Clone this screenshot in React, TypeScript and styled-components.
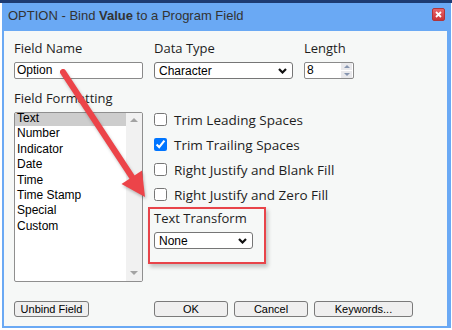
import styled, { createGlobalStyle } from "styled-components";

const GlobalStyle = createGlobalStyle`
  html, body {
    margin: 0;
    padding: 0;
  }
  body {
    width: 452px;
    height: 330px;
    overflow: hidden;
    background: #ffffff;
    font-family: "Liberation Sans", Arial, sans-serif;
  }
`;

const Screen = styled.div`
  position: relative;
  width: 452px;
  height: 330px;
  box-sizing: border-box;
  padding: 3px 0 0 2px;
  background: linear-gradient(#1d3b72 0 3px, #ffffff 3px);
`;

const Window = styled.div`
  width: 449px;
  height: 325px;
  box-sizing: border-box;
  padding: 0 4px 2px 2px;
  background: #6aa9f4;
  display: flex;
  flex-direction: column;
`;

const TitleBar = styled.div`
  height: 28px;
  flex: none;
  display: flex;
  align-items: center;
  justify-content: space-between;
  padding: 0 2px 3px 4px;
  box-sizing: border-box;
  font-size: 13px;
  color: #333333;
`;

const CloseButton = styled.div`
  width: 13px;
  height: 13px;
  box-sizing: border-box;
  align-self: flex-start;
  margin-top: 5px;
  border: 1px solid #b0353a;
  border-radius: 2px;
  background: linear-gradient(#e8646a, #c93338);
  display: grid;
  place-items: center;
`;

const Body = styled.div`
  flex: 1;
  background: #f6f8f7;
  padding: 9px 10px 0 10px;
  display: flex;
  flex-direction: column;
`;

const TopRow = styled.div`
  display: flex;
  gap: 11px;
`;

const Group = styled.div<{ $w: number }>`
  width: ${(p) => p.$w}px;
  display: flex;
  flex-direction: column;
`;

const Label = styled.div<{ $gap?: number }>`
  font-family: "Open Sans", sans-serif;
  font-size: 13px;
  line-height: 16px;
  color: #1e1e1e;
  margin-bottom: ${(p) => p.$gap ?? 6}px;
  white-space: nowrap;
`;

const TextBox = styled.div`
  height: 17px;
  box-sizing: border-box;
  border: 1px solid #8a8a8a;
  border-radius: 2px;
  background: #ffffff;
  font-size: 12px;
  line-height: 15px;
  padding: 0 2px;
  color: #000;
  display: flex;
  align-items: center;
  justify-content: space-between;
`;

const Spinner = styled.div`
  width: 11px;
  align-self: stretch;
  display: flex;
  flex-direction: column;
  gap: 1px;
  margin-right: -1px;
`;

const SpinHalf = styled.div<{ $down?: boolean }>`
  flex: 1;
  background: #e9e9ec;
  display: grid;
  place-items: center;
  &::after {
    content: "";
    border-left: 3px solid transparent;
    border-right: 3px solid transparent;
    ${(p) =>
      p.$down ? "border-top: 3px solid #8796b0;" : "border-bottom: 3px solid #8796b0;"}
  }
`;

const Select = styled.div<{ $w?: number }>`
  ${(p) => (p.$w ? `width: ${p.$w}px;` : "")}
  height: 17px;
  box-sizing: border-box;
  border: 1px solid #767676;
  border-radius: 3px;
  background: #ffffff;
  font-size: 12px;
  color: #000;
  padding: 0 5px 0 4px;
  display: flex;
  align-items: center;
  justify-content: space-between;
`;

const FormatRow = styled.div`
  margin-top: 11px;
  display: grid;
  grid-template-columns: 129px 1fr;
  column-gap: 11px;
`;

const ListBox = styled.div`
  height: 170px;
  box-sizing: border-box;
  border: 1px solid #8f8f8f;
  border-radius: 2px;
  background: #ffffff;
  display: flex;
  overflow: hidden;
`;

const Items = styled.div`
  flex: 1;
  margin-top: -2px;
`;

const Item = styled.div<{ $selected?: boolean }>`
  font-size: 12px;
  line-height: 15.4px;
  padding-left: 2px;
  color: #000;
  background: ${(p) => (p.$selected ? "#cdcdcd" : "transparent")};
`;

const ScrollTrack = styled.div`
  width: 16px;
  background: #f1f1f1;
  display: flex;
  flex-direction: column;
  justify-content: space-between;
  align-items: center;
  padding: 5px 0 6px;
`;

const Triangle = styled.div<{ $down?: boolean }>`
  border-left: 4px solid transparent;
  border-right: 4px solid transparent;
  ${(p) =>
    p.$down ? "border-top: 4px solid #a3a3a3;" : "border-bottom: 4px solid #a3a3a3;"}
`;

const Options = styled.div`
  padding-top: 17px;
  display: flex;
  flex-direction: column;
  align-items: flex-start;
`;

const CheckRow = styled.label`
  height: 25px;
  display: flex;
  align-items: center;
  font-family: "Open Sans", sans-serif;
  font-size: 13.5px;
  line-height: 16px;
  color: #1e1e1e;
  white-space: nowrap;
  input {
    width: 13px;
    height: 13px;
    margin: 0 7px 0 0;
  }
`;

const Highlight = styled.div`
  margin-left: -6px;
  width: 118px;
  box-sizing: border-box;
  border: 2px solid #e8444a;
  padding: 1px 0 13px 4px;
  box-shadow: 2px 3px 4px rgba(0, 0, 0, 0.22);
`;

const ButtonRow = styled.div`
  margin-top: 19px;
  display: grid;
  grid-template-columns: 129px 1fr;
  column-gap: 11px;
`;

const ButtonGroup = styled.div`
  display: flex;
  gap: 6px;
`;

const Button = styled.div<{ $w: number }>`
  width: ${(p) => p.$w}px;
  height: 16px;
  box-sizing: border-box;
  border: 1px solid #7a7a7a;
  border-radius: 3px;
  background: #efefef;
  font-size: 11px;
  line-height: 14px;
  color: #000;
  text-align: center;
`;

const Annotation = styled.svg`
  position: absolute;
  left: 0;
  top: 0;
  pointer-events: none;
  filter: drop-shadow(1px 2px 1.5px rgba(0, 0, 0, 0.25));
`;

const Chevron = () => (
  <svg width="9" height="6" viewBox="0 0 9 6">
    <path d="M1 1 L4.5 4.5 L8 1" fill="none" stroke="#111" strokeWidth="2.2" />
  </svg>
);

const formats = ["Text", "Number", "Indicator", "Date", "Time", "Time Stamp", "Special", "Custom"];

const checks = [
  { label: "Trim Leading Spaces", on: false },
  { label: "Trim Trailing Spaces", on: true },
  { label: "Right Justify and Blank Fill", on: false },
  { label: "Right Justify and Zero Fill", on: false },
];

export default function App() {
  return (
    <>
      <GlobalStyle />
      <Screen>
        <Window>
          <TitleBar>
            <span>
              OPTION - Bind <b>Value</b> to a Program Field
            </span>
            <CloseButton>
              <svg width="7" height="7" viewBox="0 0 7 7">
                <path d="M1 1 L6 6 M6 1 L1 6" stroke="#fff" strokeWidth="1.8" />
              </svg>
            </CloseButton>
          </TitleBar>
          <Body>
            <TopRow>
              <Group $w={129}>
                <Label>Field Name</Label>
                <TextBox>Option</TextBox>
              </Group>
              <Group $w={139}>
                <Label>Data Type</Label>
                <Select>
                  Character
                  <Chevron />
                </Select>
              </Group>
              <Group $w={50}>
                <Label>Length</Label>
                <TextBox>
                  8
                  <Spinner>
                    <SpinHalf />
                    <SpinHalf $down />
                  </Spinner>
                </TextBox>
              </Group>
            </TopRow>
            <FormatRow>
              <Group $w={129}>
                <Label>Field Formatting</Label>
                <ListBox>
                  <Items>
                    {formats.map((f, i) => (
                      <Item key={f} $selected={i === 0}>
                        {f}
                      </Item>
                    ))}
                  </Items>
                  <ScrollTrack>
                    <Triangle />
                    <Triangle $down />
                  </ScrollTrack>
                </ListBox>
              </Group>
              <Options>
                {checks.map((c) => (
                  <CheckRow key={c.label}>
                    <input type="checkbox" defaultChecked={c.on} />
                    {c.label}
                  </CheckRow>
                ))}
                <Highlight>
                  <Label>Text Transform</Label>
                  <Select $w={99}>
                    None
                    <Chevron />
                  </Select>
                </Highlight>
              </Options>
            </FormatRow>
            <ButtonRow>
              <Button $w={75}>Unbind Field</Button>
              <ButtonGroup>
                <Button $w={74}>OK</Button>
                <Button $w={74}>Cancel</Button>
                <Button $w={99}>Keywords...</Button>
              </ButtonGroup>
            </ButtonRow>
          </Body>
        </Window>
        <Annotation width="452" height="330" viewBox="0 0 452 330">
          <line x1="63" y1="72" x2="132" y2="177" stroke="#ec4449" strokeWidth="6" strokeLinecap="round" />
          <polygon points="145,197 142,170.5 121.5,184" fill="#ec4449" />
        </Annotation>
      </Screen>
    </>
  );
}
